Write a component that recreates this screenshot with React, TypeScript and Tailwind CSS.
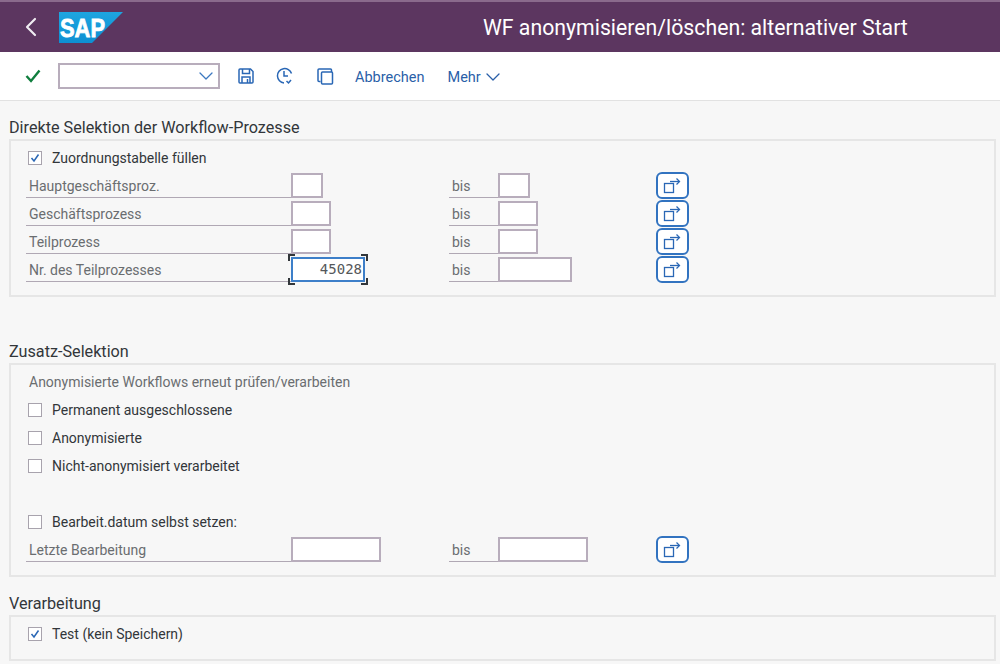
import { ChevronDown, ChevronLeft } from "lucide-react";

const font = { fontFamily: 'Roboto, "Liberation Sans", sans-serif' };

function SapLogo() {
    return (
        <svg width="64" height="31" viewBox="0 0 64 31">
            <defs>
                <linearGradient id="sapBlue" x1="0" y1="0" x2="0" y2="1">
                    <stop offset="0" stopColor="#1ea5e0" />
                    <stop offset="1" stopColor="#0d8fd2" />
                </linearGradient>
            </defs>
            <polygon points="0,0 64,0 33,31 0,31" fill="url(#sapBlue)" />
            <text x="1" y="25" fill="#fff" stroke="#fff" strokeWidth="0.8" fontSize="26" fontWeight="700" fontFamily="Liberation Sans" textLength="45" lengthAdjust="spacingAndGlyphs">SAP</text>
        </svg>
    );
}

function SaveIcon() {
    return (
        <svg width="16" height="16" viewBox="0 0 16 16" fill="none" stroke="#2a67b5" strokeWidth="1.5">
            <path d="M1 2a1 1 0 0 1 1-1h10.500l2.500 2.500v10.500a1 1 0 0 1-1 1h-12a1 1 0 0 1-1-1z" />
            <path d="M4.500 1v4.500h7v-4.500" />
            <path d="M4 15v-6h8v6" />
            <path d="M9.500 11v4" />
        </svg>
    );
}

function ClockIcon() {
    return (
        <svg width="17" height="18" viewBox="0 0 17 18" fill="none" stroke="#2a67b5" strokeWidth="1.5">
            <path d="M15.500 6.500A7.200 7.200 0 1 0 8 15.900" />
            <path d="M8 4v5h4" />
            <path d="M10.500 14l2 2 2.500-3" />
        </svg>
    );
}

function CopyIcon() {
    return (
        <svg width="17" height="17" viewBox="0 0 17 17" fill="none" stroke="#2a67b5" strokeWidth="1.5">
            <path d="M4 1h9.500a1 1 0 0 1 1 1v2" />
            <path d="M3.500 13.500h-1.500a1 1 0 0 1-1-1v-10.500a1 1 0 0 1 1-1h2" />
            <rect x="4.500" y="4" width="11" height="12" rx="1" />
        </svg>
    );
}

function Checkbox({ checked }: { checked?: boolean }) {
    return (
        <span className="flex h-[14px] w-[14px] items-center justify-center border border-[#a8a3ad] bg-white">
            {checked && (
                <svg width="12" height="12" viewBox="0 0 12 12" fill="none" stroke="#2a67b5" strokeWidth="1.5">
                    <path d="M2.500 6l2.500 3L9.500 2.500" />
                </svg>
            )}
        </span>
    );
}

function CheckRow({ label, checked }: { label: string; checked?: boolean }) {
    return (
        <div className="flex h-7 items-center gap-[10px] pl-[2px] text-[14px] text-[#32363a]">
            <Checkbox checked={checked} />
            <span>{label}</span>
        </div>
    );
}

function Field({ width, value, focused }: { width: number; value?: string; focused?: boolean }) {
    if (focused) {
        return (
            <span className="relative mt-[1px] flex h-[25px] w-[74px] items-center justify-end border-2 border-[#3d7fc9] bg-white pr-[1px] text-[14px] text-[#55585b]" style={{ fontFamily: '"DejaVu Sans Mono", monospace' }}>
                {value}
                <span className="absolute -left-[5px] -top-[5px] h-[7px] w-[7px] border-l-2 border-t-2 border-[#32363a]" />
                <span className="absolute -right-[5px] -top-[5px] h-[7px] w-[7px] border-r-2 border-t-2 border-[#32363a]" />
                <span className="absolute -bottom-[5px] -left-[5px] h-[7px] w-[7px] border-b-2 border-l-2 border-[#32363a]" />
                <span className="absolute -bottom-[5px] -right-[5px] h-[7px] w-[7px] border-b-2 border-r-2 border-[#32363a]" />
            </span>
        );
    }
    return <span className="mt-[1px] block h-[25px] border-2 border-[#b8adbc] bg-white" style={{ width }} />;
}

function MultiButton() {
    return (
        <button className="flex h-[27px] w-[33px] items-center justify-center rounded-[6px] border-2 border-[#3273c0] bg-white">
            <svg width="19" height="17" viewBox="0 0 19 17" fill="none" stroke="#2a67b5" strokeWidth="1.300">
                <rect x="1.500" y="6.500" width="9" height="9" />
                <path d="M7 4.500h9" />
                <path d="M13.500 1.500l3 3-3 3" />
            </svg>
        </button>
    );
}

function RangeRow({ label, from, to, value, focused }: { label: string; from: number; to: number; value?: string; focused?: boolean }) {
    return (
        <div className="grid h-7 grid-cols-[265px_158px_49px_158px_33px] items-start text-[14px] text-[#6a6d70]">
            <div className="mt-[1px] flex h-[25px] items-center border-b border-[#b0a8b4] pl-[3px] pt-[2px]">{label}</div>
            <Field width={from} value={value} focused={focused} />
            <div className="mt-[1px] flex h-[25px] items-center border-b border-[#b0a8b4] pl-[3px] pt-[2px]">bis</div>
            <Field width={to} />
            <MultiButton />
        </div>
    );
}

function Panel({ title, className, children }: { title: string; className: string; children: React.ReactNode }) {
    return (
        <section>
            <h2 className="flex h-[24px] items-end pb-[1px] pl-[9px] text-[16.200px] leading-[20px] text-[#32363a]">{title}</h2>
            <div className={`ml-[9px] mr-[4px] border-2 border-[#e6e6e6] pl-[15px] ${className}`}>{children}</div>
        </section>
    );
}

export default function App() {
    return (
        <div className="flex h-[664px] w-[1000px] flex-col overflow-hidden bg-[#f7f7f7]" style={font}>
            <header className="flex h-[52px] items-center border-t-2 border-[#8a6a8c] bg-[#5c3660] text-white">
                <ChevronLeft size={32} strokeWidth={1.6} className="ml-[15px] text-[#f0ecf2]" />
                <span className="ml-[12px] flex"><SapLogo /></span>
                <h1 className="ml-[360px] whitespace-nowrap pt-[1px] text-[21.250px] font-normal">WF anonymisieren/löschen: alternativer Start</h1>
            </header>

            <div className="flex h-[49px] items-center border-b border-[#e2e2e2] bg-white text-[14.500px] text-[#2a5fa8]">
                <svg width="16" height="14" viewBox="0 0 16 14" fill="none" stroke="#107e3e" strokeWidth="2.400" className="ml-[25px]">
                    <path d="M1.500 7l4.500 5L14.500 1.500" />
                </svg>
                <div className="ml-[17px] flex h-[26px] w-[162px] items-center justify-end border-2 border-[#b8adbc] bg-white">
                    <ChevronDown size={24} strokeWidth={1.300} className="text-[#3c78c0]" />
                </div>
                <span className="ml-[18px] flex"><SaveIcon /></span>
                <span className="ml-[22px] flex"><ClockIcon /></span>
                <span className="ml-[24px] flex"><CopyIcon /></span>
                <span className="ml-[21px] pt-[3px]">Abbrechen</span>
                <span className="ml-[23px] pt-[3px]">Mehr</span>
                <ChevronDown size={24} strokeWidth={1.300} className="mt-[2px]" />
            </div>

            <div className="pt-[14px]">
                <Panel title="Direkte Selektion der Workflow-Prozesse" className="h-[158px] pt-[3px]">
                    <CheckRow label="Zuordnungstabelle füllen" checked />
                    <RangeRow label="Hauptgeschäftsproz." from={32} to={32} />
                    <RangeRow label="Geschäftsprozess" from={40} to={40} />
                    <RangeRow label="Teilprozess" from={40} to={40} />
                    <RangeRow label="Nr. des Teilprozesses" from={74} to={74} value="45028" focused />
                </Panel>
            </div>

            <div className="pt-[42px]">
                <Panel title="Zusatz-Selektion" className="h-[214px] pt-[3px]">
                    <div className="flex h-7 items-center pl-[3px] text-[14px] text-[#6a6d70]">Anonymisierte Workflows erneut prüfen/verarbeiten</div>
                    <CheckRow label="Permanent ausgeschlossene" />
                    <CheckRow label="Anonymisierte" />
                    <CheckRow label="Nicht-anonymisiert verarbeitet" />
                    <div className="h-7" />
                    <CheckRow label="Bearbeit.datum selbst setzen:" />
                    <RangeRow label="Letzte Bearbeitung" from={90} to={90} />
                </Panel>
            </div>

            <div className="pt-[14px]">
                <Panel title="Verarbeitung" className="h-[46px] pt-[3px]">
                    <CheckRow label="Test (kein Speichern)" checked />
                </Panel>
            </div>
        </div>
    );
}
